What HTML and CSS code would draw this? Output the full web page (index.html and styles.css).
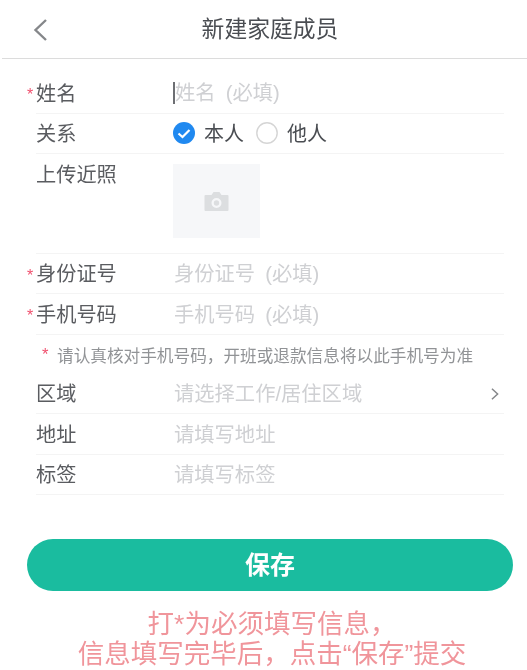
FILE: index.html
```html
<!DOCTYPE html>
<html lang="zh-CN">
<head>
<meta charset="utf-8">
<title>新建家庭成员</title>
<link rel="stylesheet" href="styles.css">
</head>
<body>
<div class="page">
  <header class="header">
    <svg class="back" viewBox="0 0 16 24" width="16" height="24"><path d="M14 2 3.5 12 14 22" fill="none" stroke="#85878a" stroke-width="2.4"/></svg>
    <h1 class="title">新建家庭成员</h1>
  </header>
  <main class="form">
    <div class="row">
      <label class="label required">姓名</label>
      <span class="value placeholder caret">姓名&ensp;(必填)</span>
    </div>
    <div class="row">
      <label class="label">关系</label>
      <div class="radios">
        <svg class="radio" viewBox="0 0 22 22" width="22" height="22"><circle cx="11" cy="11" r="11" fill="#2089f0"/><path d="M5.500 11.500 9.500 15 16.500 8" fill="none" stroke="#fff" stroke-width="2.200"/></svg>
        <span class="radio-text">本人</span>
        <svg class="radio" viewBox="0 0 22 22" width="22" height="22"><circle cx="11" cy="11" r="10.200" fill="#fff" stroke="#d5d5d5" stroke-width="1.400"/></svg>
        <span class="radio-text">他人</span>
      </div>
    </div>
    <div class="row row-upload">
      <label class="label">上传近照</label>
      <div class="upload">
        <svg viewBox="0 0 24 20" width="25" height="20"><path fill-rule="evenodd" d="M1 4h6l2-3h6l2 3h6a1 1 0 0 1 1 1v14a1 1 0 0 1-1 1H1a1 1 0 0 1-1-1V5a1 1 0 0 1 1-1Zm11 3a5 5 0 1 0 0 10 5 5 0 0 0 0-10Zm0 2.300a2.700 2.700 0 1 1 0 5.400 2.700 2.700 0 0 1 0-5.400Z" fill="#dcdee0"/></svg>
      </div>
    </div>
    <div class="row">
      <label class="label required">身份证号</label>
      <span class="value placeholder">身份证号&ensp;(必填)</span>
    </div>
    <div class="row">
      <label class="label required">手机号码</label>
      <span class="value placeholder">手机号码&ensp;(必填)</span>
    </div>
    <p class="note"><span class="note-star">*</span>请认真核对手机号码，开班或退款信息将以此手机号为准</p>
    <div class="row">
      <label class="label">区域</label>
      <span class="value placeholder">请选择工作/居住区域</span>
      <svg class="chevron" viewBox="0 0 10 16" width="10" height="14"><path d="M1.500 2 8 8l-6.500 6" fill="none" stroke="#85878a" stroke-width="1.700"/></svg>
    </div>
    <div class="row">
      <label class="label">地址</label>
      <span class="value placeholder">请填写地址</span>
    </div>
    <div class="row">
      <label class="label">标签</label>
      <span class="value placeholder">请填写标签</span>
    </div>
  </main>
  <button class="save" type="button">保存</button>
  <p class="hint">打*为必须填写信息，<br>信息填写完毕后，点击“保存”提交</p>
</div>
</body>
</html>
```
FILE: styles.css
```css
* { box-sizing: border-box; }
html, body { margin: 0; padding: 0; background: #fff; }
body {
  font-family: "Liberation Sans", "Noto Sans CJK SC", sans-serif;
  overflow: hidden;
}
.page {
  width: 527px;
  height: 670px;
  overflow: hidden;
  filter: blur(0.45px);
}
.header {
  height: 59px;
  margin-left: 2px;
  border-bottom: 1px solid #dcdcdc;
  display: flex;
  align-items: center;
  justify-content: center;
  position: relative;
}
.back { position: absolute; left: 30px; top: 18px; }
.title {
  margin: 0 0 0 11px;
  font-size: 22.800px;
  font-weight: 400;
  color: #4a4d52;
  line-height: 30px;
}
.form { padding: 14px 23px 0 36px; }
.row {
  height: 40.500px;
  display: flex;
  align-items: center;
  border-bottom: 1px solid #f4f4f4;
  position: relative;
}
.row-upload { height: 99.500px; align-items: flex-start; }
.label {
  width: 138px;
  flex: none;
  padding-top: 2px;
  font-size: 20.200px;
  line-height: 38px;
  color: #5a5c60;
}
.required::before {
  content: "*";
  position: absolute;
  left: -9px;
  top: 7px;
  color: #f0506e;
  font-size: 16px;
  line-height: 30px;
}
.value {
  padding-top: 2px;
  font-size: 20.300px;
  line-height: 38px;
  word-spacing: 4px;
}
.placeholder { color: #cfd0d3; }
.caret {
  border-left: 2px solid #6d6f73;
  padding-top: 0;
  line-height: 22px;
  margin-top: 1px;
  margin-left: -1px;
}
.radios { display: flex; align-items: center; margin-left: -1px; }
.radio { flex: none; }
.radio-text {
  padding-top: 2px;
  font-size: 20px;
  line-height: 38px;
  color: #4a4d52;
  margin: 0 12px 0 9px;
}
.upload {
  width: 87px;
  height: 74px;
  margin-top: 10px;
  margin-left: -1px;
  background: #f6f7f9;
  display: flex;
  align-items: center;
  justify-content: center;
}
.chevron { position: absolute; right: 4px; top: 13px; }
.note {
  margin: 0;
  height: 39px;
  padding: 2px 0 0 6px;
  display: flex;
  align-items: center;
  font-size: 16.650px;
  color: #919396;
  white-space: nowrap;
}
.note-star { color: #f0506e; width: 15px; flex: none; }
.save {
  display: block;
  width: 486px;
  height: 52px;
  margin: 44px 0 0 27px;
  border: 0;
  border-radius: 26px;
  background: #1abc9f;
  color: #fff;
  font-family: inherit;
  font-size: 25px;
  font-weight: 700;
  line-height: 52px;
  padding: 0;
}
.hint {
  margin: 18px 0 0;
  text-align: center;
  font-size: 26.500px;
  line-height: 30px;
  color: #f0959b;
  padding-left: 17px;
  white-space: nowrap;
}
```
